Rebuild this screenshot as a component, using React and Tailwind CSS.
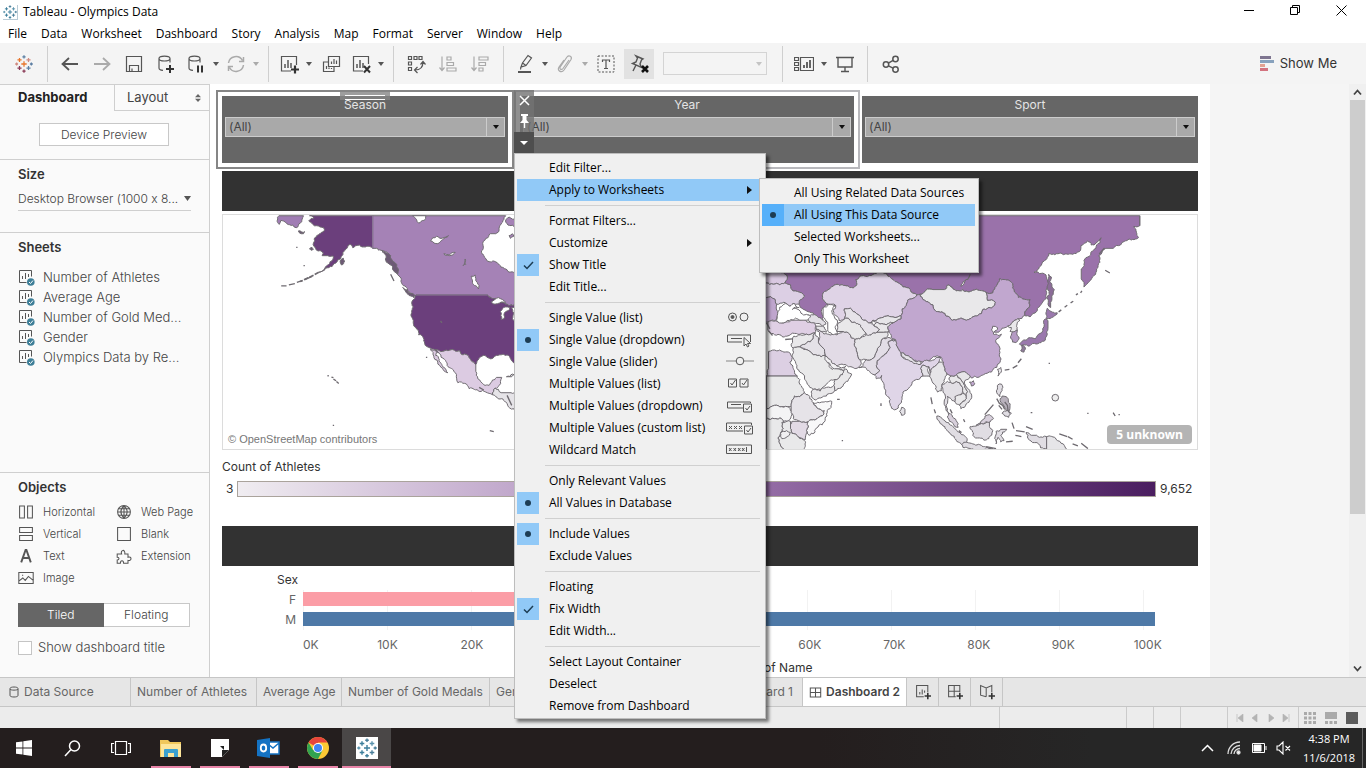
import React from "react";

const UI = "font-['Open_Sans','Noto_Sans','Liberation_Sans',sans-serif]";
const TB = "font-['Inter','Liberation_Sans',sans-serif] [font-feature-settings:'calt'_0]";

/* ---------- map geometry ---------- */

function hash(a, b, c, d) {
  const s = Math.sin(a * 12.9898 + b * 78.233 + c * 37.719 + d * 4.581) * 43758.5453;
  return s - Math.floor(s) - 0.5;
}

// Splits an edge with offsets that depend only on its two ends, so neighbours share borders.
function split(p, q, out, depth) {
  const dx = q[0] - p[0];
  const dy = q[1] - p[1];
  const len = Math.hypot(dx, dy);
  if (depth === 0 || len < 7 || len > 90 || dx === 0 || dy === 0) {
    out.push(q);
    return;
  }
  const flip = p[0] > q[0];
  const a = flip ? q : p;
  const b = flip ? p : q;
  const h = hash(a[0], a[1], b[0], b[1]) * 0.42;
  const m = [(a[0] + b[0]) / 2 - (b[1] - a[1]) * h, (a[1] + b[1]) / 2 + (b[0] - a[0]) * h];
  split(p, m, out, depth - 1);
  split(m, q, out, depth - 1);
}

function coast(text) {
  const pts = text.trim().split(/\s+/).map((t) => t.split(",").map(Number));
  const out = [pts[0]];
  for (let i = 0; i < pts.length; i++) split(pts[i], pts[(i + 1) % pts.length], out, 3);
  return "M" + out.map((p) => p[0].toFixed(1) + " " + p[1].toFixed(1)).join("L") + "Z";
}

const AMERICAS = [
  ["#a07db4", "198,30 272,30 268,40 262,52 250,66 240,58 222,54 212,46 204,44 199,56"],
  ["#6b3f7c", "290,30 480,30 480,128 465,122 450,124 440,118 428,120 420,126 412,116 404,126 396,134 388,150 376,162 364,174 348,186 330,196 318,200 338,184 352,168 362,152 345,150 328,150 332,142 316,136 308,128 302,112 306,96 320,84 334,76 332,66 312,60 300,56 288,44 304,36"],
  ["#a582b6", "480,30 880,30 874,42 866,56 860,72 850,84 834,84 820,98 812,120 814,150 830,168 856,174 880,190 912,196 912,302 880,296 862,288 836,276 824,268 612,268 600,270 585,255 572,240 566,222 556,208 548,190 540,170 528,152 518,138 505,134 492,128 480,128"],
  ["#6b3f7c", "612,268 824,268 836,276 862,288 880,296 912,302 912,480 900,468 888,450 872,446 852,450 842,458 818,450 800,458 790,478 776,466 768,452 752,448 740,436 712,434 690,438 654,428 636,414 618,388 604,362 600,340 602,304 598,288"],
  ["#dccbe2", "668,432 690,438 712,434 740,436 752,448 768,452 776,466 790,478 790,498 796,520 814,538 830,540 840,524 852,516 868,516 860,540 848,548 840,568 820,560 800,558 770,550 736,532 732,508 714,488 696,462 680,444"],
  ["#dccbe2", "654,430 668,434 680,462 694,486 706,502 694,496 676,476 664,456"],
  ["#e6e4e8", "840,568 848,548 858,552 866,562 896,562 912,566 912,618 892,608 880,590 868,580 850,574"],
  ["#fff", "600,30 640,30 634,44 618,52 612,42"],
  ["#fff", "654,106 672,92 708,90 690,102 676,114 664,112"],
  ["#fff", "694,144 728,140 710,150"],
  ["#fff", "752,180 758,160 760,176"],
  ["#fff", "776,212 788,208 794,230 798,250 786,240 780,226"],
  ["#fff", "836,290 858,276 880,290 862,292"],
  ["#fff", "866,342 864,318 880,304 892,306 880,318 874,340"],
  ["#fff", "898,306 912,308 912,350 900,340"],
  ["#a582b6", "880,42 890,34 912,44 912,68 900,58 884,54"],
  ["#a582b6", "890,90 900,84 904,92 894,98"],
  ["#6d5a75", "508,138 522,142 538,164 552,184 556,204 544,196 530,176 518,160"],
  ["#6d5a75", "570,246 584,254 606,268 604,276 586,266"],
  ["#6d5a75", "382,166 392,158 396,166 386,178"],
  ["#6d5a75", "290,130 296,124 302,130 296,134"],
  ["#6d5a75", "256,76 276,78 272,84 260,82"],
  ["#ddd", "882,514 900,506 912,508 898,514"],
];

const ASIA = [
  ["#9a72aa", "0,30 1142,30 1142,60 1124,62 1132,80 1138,96 1110,100 1084,118 1062,128 1040,128 1028,142 1018,150 1022,170 1012,190 1004,210 990,228 974,244 966,220 966,190 974,165 990,152 1010,128 1022,112 1026,96 1010,112 996,118 985,105 965,120 960,138 940,146 905,142 868,144 850,168 838,190 824,200 840,204 860,208 866,225 862,260 850,290 832,318 812,334 796,330 796,318 810,304 812,282 790,280 770,264 760,240 748,224 720,220 706,250 700,262 680,260 640,254 610,252 590,256 565,238 555,252 520,252 482,266 472,268 452,252 430,244 400,222 385,212 345,204 300,212 288,222 290,240 270,246 240,240 210,250 190,262 188,280 205,296 192,306 186,322 190,344 176,336 160,322 140,316 122,306 118,296 134,272 126,262 100,256 92,238 75,232 80,208 60,200 0,200"],
  ["#d9c8e1", "0,200 60,200 80,208 75,232 60,238 40,236 0,240"],
  ["#dccfe4", "0,240 40,236 60,238 75,232 92,238 100,256 126,262 134,272 118,296 104,294 90,302 72,290 50,296 44,280 20,276 0,280"],
  ["#bfa5cd", "0,280 20,276 44,280 50,296 54,318 48,344 20,350 0,346"],
  ["#dfd3e6", "288,222 300,212 345,204 385,212 400,222 430,244 452,252 472,268 456,280 444,284 440,300 428,310 424,330 400,334 380,332 360,338 340,344 332,352 318,344 300,330 280,318 272,308 254,310 252,342 238,345 228,330 220,316 228,300 216,296 205,296 188,280 190,262 210,250 240,240 270,246 290,240"],
  ["#e9e8ea", "482,272 482,266 520,252 555,252 565,238 590,256 610,252 640,254 680,260 684,284 708,290 700,304 670,312 655,330 628,342 600,340 560,332 530,318 520,298 500,288"],
  ["#c1a7cf", "472,268 482,266 482,272 500,288 520,298 530,318 560,332 600,340 628,342 655,330 670,312 700,304 708,290 684,284 680,260 700,262 706,250 720,220 748,224 760,240 770,264 790,280 812,282 810,304 796,318 796,330 775,340 760,350 745,362 728,368 718,380 704,380 714,366 700,362 696,374 702,386 716,390 726,386 712,400 710,412 722,430 720,452 722,470 712,486 696,500 672,508 645,512 636,518 622,504 606,500 590,508 575,512 562,506 556,490 552,470 545,456 530,452 515,460 490,470 460,462 440,450 424,444 416,430 408,404 395,396 388,376 384,364 400,352 424,340 424,330 428,310 440,300 444,284 456,280"],
  ["#c1a7cf", "630,530 642,526 646,534 636,542"],
  ["#dfd5e7", "386,408 408,404 416,430 424,444 440,462 484,476 490,470 515,466 530,456 545,456 538,470 520,486 512,504 508,484 488,480 486,500 490,512 470,522 450,545 430,560 426,590 416,608 404,614 392,600 380,570 370,530 366,510 350,520 344,508 360,496 350,480 364,456 380,444 392,426"],
  ["#e4e2e7", "424,444 440,450 460,462 484,468 484,476 462,474 440,462 426,452"],
  ["#e4e2e7", "488,480 508,484 506,500 514,512 500,512 490,512 486,500"],
  ["#e4e2e7", "426,606 436,612 436,626 426,630 420,618"],
  ["#e2dde6", "296,486 310,480 318,462 340,458 350,440 362,420 372,398 388,396 408,404 386,408 392,426 380,444 364,456 350,480 360,496 344,508 330,498 306,486"],
  ["#e6e5e8", "286,402 300,400 318,390 334,388 352,380 372,380 388,376 384,392 372,398 362,420 350,440 340,458 318,462 296,458 290,436 284,420"],
  ["#e2dbe6", "170,372 184,378 204,386 232,388 250,378 270,386 286,402 284,420 290,436 296,458 304,470 296,486 266,484 252,478 232,482 216,474 204,458 196,448 190,428 176,412 180,396"],
  ["#e9e8ea", "230,378 236,352 252,342 266,338 290,354 310,372 320,386 300,400 286,402 270,386 250,378"],
  ["#e6e3e9", "252,342 254,310 272,308 280,318 300,330 318,344 332,352 344,362 360,372 352,380 334,388 320,386 310,372 290,354 266,338"],
  ["#e6e5e8", "332,352 340,344 360,338 380,332 400,334 424,330 424,340 400,352 372,356 352,350"],
  ["#e9e8ea", "344,362 352,350 372,356 400,352 384,364 388,376 372,380 352,380 360,372"],
  ["#dfcfe4", "24,350 48,346 72,352 94,344 120,344 142,350 160,350 168,362 166,382 140,386 110,384 88,390 60,388 40,384 24,374"],
  ["#e2dfe5", "140,330 160,328 176,336 190,344 198,356 188,362 178,354 164,352 148,346"],
  ["#e6e5e8", "168,362 188,362 200,380 184,378 170,372"],
  ["#e9e8ea", "102,392 122,388 140,386 166,382 160,400 140,412 118,424 100,428 98,404"],
  ["#e4e1e7", "140,412 160,400 166,382 176,396 176,412 190,428 196,448 184,454 160,448 138,432 122,424"],
  ["#e9e9ea", "100,428 118,424 138,432 160,448 184,454 196,450 204,470 218,492 224,486 250,494 248,508 226,522 200,536 160,552 150,546 134,518 120,500 108,474 96,452"],
  ["#e9e8ea", "154,560 160,552 200,546 222,540 226,556 200,572 166,584 156,576"],
  ["#e9e8ea", "226,522 248,508 250,494 258,490 276,506 264,528 244,548 226,556 222,540"],
  ["#f2f1f3", "196,452 206,460 218,474 232,482 250,486 258,482 252,496 240,490 224,490 210,474"],
  ["#dccfe3", "26,438 50,436 86,440 96,462 90,470 104,496 112,512 20,512 26,490"],
  ["#e9e9ea", "20,512 112,512 120,536 134,562 120,574 104,572 96,590 94,604 66,604 44,600 20,610"],
  ["#f4f4f5", "20,610 44,600 66,604 88,606 96,624 90,642 72,648 44,640 20,636"],
  ["#e6e3e8", "104,572 120,574 134,562 150,580 160,592 176,610 194,616 172,640 144,650 120,648 100,640 94,622 94,604 96,590"],
  ["#f8f8f9", "160,592 186,590 216,588 214,606 196,640 170,668 148,690 142,680 144,650 172,640 194,616 176,610"],
  ["#e2dae5", "96,648 120,648 144,650 142,680 136,704 116,696 96,684 92,670"],
  ["#e9e9ea", "66,652 92,648 92,670 96,684 116,696 134,706 132,733 72,733 58,712 62,684"],
  ["#e9e9ea", "20,636 44,640 72,648 66,652 62,684 58,712 72,733 20,733"],
  ["#f0eff1", "62,684 80,676 92,682 82,694 66,700"],
  ["#e6e5e8", "512,504 520,486 538,470 552,470 556,490 562,506 556,520 548,536 546,556 534,560 528,540 516,524"],
  ["#e2dfe5", "548,536 564,528 580,534 590,528 606,542 610,560 590,574 586,590 572,578 564,572 560,600 566,622 560,616 554,590 556,566 550,552"],
  ["#e9e8ea", "575,512 590,508 604,522 616,540 624,558 620,572 610,560 606,542 590,528 580,534 568,522"],
  ["#e6e5e8", "590,508 606,500 622,504 632,514 616,526 618,540 632,562 634,582 620,596 604,610 600,600 616,586 620,572 624,558 616,540 604,522"],
  ["#e9e8ea", "586,574 610,564 620,572 616,586 600,600 588,592"],
  ["#d7cfdb", "566,622 578,630 590,646 596,666 586,664 570,648"],
  ["#e0dde3", "532,632 552,644 580,664 604,686 622,708 618,720 600,712 576,690 556,664 540,650"],
  ["#e0dde3", "606,718 640,716 672,724 700,730 684,733 640,731 610,726"],
  ["#e0dde3", "632,664 650,662 666,654 690,650 690,664 700,676 688,700 660,698 640,690"],
  ["#d7cfdb", "650,660 670,644 690,628 702,640 692,650 672,656"],
  ["#e0dde3", "710,678 724,672 742,672 730,680 724,690 734,706 724,710 716,696 710,716 706,700"],
  ["#e0dde3", "800,682 816,690 832,690 850,696 862,694 862,733 844,728 826,712 806,700"],
  ["#e6e5e8", "862,694 890,702 912,716 924,733 862,733"],
  ["#e0dde3", "714,540 726,536 728,556 722,574 712,562"],
  ["#b9b2bd", "728,572 740,574 752,600 748,618 736,606 724,590"],
  ["#e0dde3", "728,624 744,614 756,624 748,636 736,632"],
  ["#eceaed", "714,492 724,486 722,504 716,512"],
  ["#e9e8ea", "745,362 760,350 775,340 782,344 772,360 774,374 762,380 752,378 756,366"],
  ["#b49ac3", "758,380 774,374 778,394 774,408 760,410 754,398"],
  ["#9a78ad", "858,340 866,346 866,368 862,392 858,404 840,412 820,414 808,422 794,418 780,416 800,404 828,400 842,384 854,364"],
  ["#8f7a9b", "786,420 796,424 794,440 784,436"],
  ["#9a78ad", "864,308 880,320 894,322 882,334 862,340 860,326"],
  ["#8b6c98", "868,206 876,214 878,240 882,266 874,290 874,306 866,296 870,256 866,230"],
  ["#fff", "190,306 206,296 228,300 216,316 224,334 232,356 234,384 216,386 204,372 204,350 190,334"],
  ["#fff", "54,318 72,296 90,302 104,294 118,306 98,312 122,318 152,332 144,344 120,344 94,342 72,352 50,344"],
  ["#fff", "632,206 626,222 604,242 618,222"],
];

const ISLANDS_W = "M205 241h16M228 238l18-4M252 230l16-5M276 222l22-10M344 511h4M356 515l6 2M362 521l8 5M371 528l7 6M832 676l12 3M250 125h4M272 180h4M360 660h4M640 456h4M534 206l10 20M684 346l4 6M800 546l14 8M884 570l14 30";
const ISLANDS_E = "M964 262l4-6M950 268l6-4M934 292l8-5M916 305l8-6M898 319l8-6M1038 194l14 8M1020 145l16-18M736 494l14-2M760 488l14-8M776 472l10-12M868 474h4M814 622h5M984 624h4M1062 622l6 10M1078 628h4M364 594v8M514 576l4 20M524 612l4 12M232 582h8M246 706h4M758 652l6 18M768 690l18 4M800 664l20 8M770 676l26 4M740 710l20-2M680 724l30 6M900 686l24 8M926 694l14 8M940 716l16 6M966 714l20 16M702 598l-26 30M712 580l8 14 10 6 6 12M736 590l8 10 2 16 6 8M718 600l10 12M20 352l10 18M26 376l12 14M76 402l22-2M612 642l4 8M598 676l8 6M572 612l6 12";

function WorldMap() {
  return (
    <svg viewBox="222 214 976 235" preserveAspectRatio="xMidYMid slice" className="block h-[234px] w-full" role="img" aria-label="Athletes by country">
      <g transform="translate(212 205) scale(0.33333)" stroke="#6e6a70" strokeWidth="3" strokeLinejoin="round">
        {AMERICAS.map(([c, d], i) => <path key={i} d={coast(d)} fill={c} />)}
        <path d={ISLANDS_W} fill="none" strokeWidth="4" />
        <path d="M318 200L296 212L262 228" fill="none" strokeWidth="5" strokeDasharray="14 4" />
        <path d="M480 30V128M612 268H824" stroke="#8e749c" fill="none" />
      </g>
      <g transform="translate(760 205) scale(0.33333)" stroke="#6e6a70" strokeWidth="3" strokeLinejoin="round">
        {ASIA.map(([c, d], i) => <path key={i} d={coast(d)} fill={c} />)}
        <path d={ISLANDS_E} fill="none" strokeWidth="4" />
        <circle cx="888" cy="577" r="10" fill="#eee" strokeWidth="3" />
        <path d="M1142 30V60" fill="none" />
      </g>
    </svg>
  );
}

/* ---------- icons ---------- */

function Icon({ size = 20, children, className = "text-[#555]", sw = 1.2, label }) {
  return (
    <svg width={size} height={size} viewBox="0 0 20 20" fill="none" stroke="currentColor" strokeWidth={sw} className={className} aria-hidden={label ? undefined : true} aria-label={label}>
      {children}
    </svg>
  );
}

function Plus({ x, y, s = 3, w = 2 }) {
  return <path d={`M${x - s} ${y}h${2 * s}M${x} ${y - s}v${2 * s}`} strokeWidth={w} stroke="#333" />;
}

function TableauMark({ colors, size }) {
  const [a, b, c, d] = colors;
  const plus = (x, y, r) => `M${x - r} ${y}h${2 * r}M${x} ${y - r}v${2 * r}`;
  return (
    <svg width={size} height={size} viewBox="0 0 20 20" fill="none" strokeWidth="1.4" aria-hidden="true">
      <path d={plus(10, 10, 3)} stroke={a} />
      <path d={plus(5, 5.5, 2.3)} stroke={a} />
      <path d={plus(15, 5.5, 2.3)} stroke={b} />
      <path d={plus(5, 14.5, 2.3)} stroke={d} />
      <path d={plus(15, 14.5, 2.3)} stroke={c} />
      <path d={plus(10, 2.2, 1.8)} stroke={c} />
      <path d={plus(10, 17.8, 1.8)} stroke={d} />
      <path d={plus(1.8, 10, 1.6)} stroke={b} />
      <path d={plus(18.2, 10, 1.6)} stroke={c} />
    </svg>
  );
}

function Caret({ light }) {
  return (
    <button aria-label="More options" className="flex w-3 justify-center">
      <svg width="6" height="4" viewBox="0 0 6 4"><path d="M0 0h6L3 4z" fill={light ? "#aaa" : "#555"} /></svg>
    </button>
  );
}

function Tool({ label, w = "w-8", children }) {
  return <button aria-label={label} className={`flex h-[30px] items-center justify-center ${w}`}>{children}</button>;
}

function Sep({ className = "mx-[6px]" }) {
  return <div className={`h-9 w-px shrink-0 bg-[#cfcfcf] ${className}`} />;
}

const DB = "M3 4.5c0-3.3 11-3.3 11 0s-11 3.3-11 0v9.500c0 1.500 1.500 2.200 4 2.400M14 4.500v4";

function Toolbar() {
  return (
    <div className="flex h-[41px] shrink-0 items-center bg-[#f4f4f4]">
      <Tool label="Start page" w="w-[47px]"><TableauMark size={18} colors={["#e8762d", "#d08a80", "#5c7fa3", "#8a3a56"]} /></Tool>
      <Sep className="mr-[6px]" />
      <Tool label="Undo"><Icon sw={1.8}><path d="M18 10H3M9 4l-6.500 6L9 16" /></Icon></Tool>
      <Tool label="Redo"><Icon sw={1.8} className="text-[#aaa]"><path d="M2 10h15M11 4l6.500 6L11 16" /></Icon></Tool>
      <Tool label="Save"><Icon><path d="M2.500 2.500h15v15h-15zM5.500 17v-5.500h9V17M8 17v-2.500" /></Icon></Tool>
      <Tool label="New data source"><Icon><path d={DB} /><Plus x={14} y={15} s={4} /></Icon></Tool>
      <Tool label="Pause updates" w="w-7"><Icon><path d={DB} /><path d="M12 11.500v7M16 11.500v7" strokeWidth="2" stroke="#333" /></Icon></Tool>
      <Caret />
      <Tool label="Refresh" w="w-7"><Icon className="text-[#aaa]" sw={1.500}><path d="M2.500 9a7.500 7.500 0 0 1 14-2.500M17.500 11a7.500 7.500 0 0 1-14 2.500M17.500 3v4.500H13M2.500 17v-4.500H7" /></Icon></Tool>
      <Caret light />
      <Sep />
      <Tool label="New worksheet" w="w-7"><Icon><path d="M12 17H2.500V2.500h15V11" /><path d="M6 14v-4M9 14V6M12 14V9" strokeWidth="1.500" /><Plus x={16} y={15.500} s={4} w={2.200} /></Icon></Tool>
      <Caret />
      <Tool label="Duplicate"><Icon><path d="M7.500 2.500h11v10h-11zM7 8H2.500v9.500h10.500V13M10.500 10V7.500M13 10V5M15.500 10V6.500M5.500 15v-3M8 15v-1.500M10.500 15v-1" /></Icon></Tool>
      <Tool label="Clear sheet" w="w-7"><Icon><path d="M12 17H2.500V2.500h15V10" /><path d="M6 14v-4M9 14V6M12 14V9" strokeWidth="1.500" /><path d="M13 12l6 6.500M19 12l-6 6.500" strokeWidth="2" stroke="#333" /></Icon></Tool>
      <Caret />
      <Sep />
      <Tool label="Swap rows and columns"><Icon><path d="M2.500 2.500h3v3h-3zM8 2.500h3v3H8zM13 2.500h3v3h-3zM2.500 8h3v3h-3zM2.500 13.500h3v3h-3zM17 8c0 5-3 8-8 8M14.500 10.500L17 7.500l2.500 3M11.500 13L8.500 16l3 3" /></Icon></Tool>
      <Tool label="Sort ascending"><Icon className="text-[#aaa]"><path d="M4 2.500v14M1.500 13.500l2.500 3 2.500-3M9 3h4v3H9zM9 8.500h6.500v3H9zM9 14h9v3H9z" /></Icon></Tool>
      <Tool label="Sort descending"><Icon className="text-[#aaa]"><path d="M4 2.500v14M1.500 13.500l2.500 3 2.500-3M9 3h9v3H9zM9 8.500h6.500v3H9zM9 14h4v3H9z" /></Icon></Tool>
      <Sep className="mx-[7px]" />
      <Tool label="Highlight" w="w-7"><Icon><path d="M6 13l1.500-4L13 1.500l3.500 2.500L11 11.500zM6 13l-.5 2.500M7.500 9l3.500 2.500" /><path d="M3 18h13" strokeWidth="2" /></Icon></Tool>
      <Caret />
      <Tool label="Group members" w="w-7"><Icon className="text-[#aaa]"><path d="M14 6l-6 8.500c-1.500 2-4 .5-2.800-1.500L12 3c2-2.500 5.500-.5 4 2.500L9 16c-2.500 3.500-7.500.5-5-3l5-7" /></Icon></Tool>
      <Caret light />
      <Tool label="Show mark labels" w="w-[30px]"><Icon><path d="M2 2h16v16H2z" strokeDasharray="2 1.500" strokeWidth="1" /><path d="M6.500 8V6h7v2M10 6v8.500M8 14.500h4" /></Icon></Tool>
      <button aria-label="Pin axes" className="ml-[3px] flex h-[30px] w-[30px] items-center justify-center bg-[#e2e2e2]"><Icon><path d="M7 2l7 3-1.500 1L11 10l1.500 3.500-9-4L7 8l1.500-4zM7 11l-3 6" strokeWidth="1.400" /><path d="M13 12l6 6M19 12l-6 6" strokeWidth="2.600" stroke="#111" /></Icon></button>
      <label className="ml-[9px] flex h-[23px] w-[104px] items-center justify-end border border-[#d4d4d4] pr-1">
        <select aria-label="Fit" className="h-full min-w-0 flex-1 appearance-none" disabled />
        <svg width="6" height="4" viewBox="0 0 6 4"><path d="M0 0h6L3 4z" fill="#c4c4c4" /></svg>
      </label>
      <Sep className="mr-[7px] ml-[15px]" />
      <Tool label="Show cards" w="w-7"><Icon><path d="M0.500 3.500h4v3h-4zM0.500 8.500h4v3h-4zM0.500 13.500h4v3h-4zM6.500 3.500h13v13h-13z" /><path d="M10 14v-3M13 14V8M16 14V6" strokeWidth="1.800" /></Icon></Tool>
      <Caret />
      <Tool label="Presentation mode" w="w-[30px]"><Icon><path d="M1 3.500h18M3 3.500v9.500h14V3.500M10 13v4M6 17.500h8" strokeWidth="1.400" /></Icon></Tool>
      <Sep className="mx-[7px]" />
      <Tool label="Share"><Icon sw={1.500}><circle cx="5" cy="10.500" r="2.700" /><circle cx="14.500" cy="5" r="2.700" /><circle cx="14.500" cy="15.500" r="2.700" /><path d="M7.400 9.200l4.700-2.800M7.400 11.800l4.700 2.400" /></Icon></Tool>
      <button className={`ml-auto mr-[29px] flex items-center gap-[6px] text-[13px] text-[#333] ${TB}`}>
        <svg width="14" height="15" viewBox="0 0 14 15" aria-hidden="true"><path d="M0 0h11v3H0z" fill="#7e7590" /><path d="M0 4h14v3H0z" fill="#88a2bd" /><path d="M0 8h5v3H0z" fill="#e2a292" /><path d="M0 12h8v3H0z" fill="#d3737f" /></svg>
        Show Me
      </button>
    </div>
  );
}

/* ---------- sidebar ---------- */

const SHEETS = ["Number of Athletes", "Average Age", "Number of Gold Med...", "Gender", "Olympics Data by Re..."];

const OBJECTS = [
  ["Horizontal", <path key="p" d="M2 2.500h6v15H2zM12 2.500h6v15h-6z" />],
  ["Web Page", <path key="p" d="M10 2a8 8 0 1 0 0 16a8 8 0 1 0 0-16zM2 10h16M3.500 6h13M3.500 14h13M10 2v16M10 2c-5 5-5 11 0 16M10 2c5 5 5 11 0 16" />],
  ["Vertical", <path key="p" d="M2 2h16v6H2zM2 12h16v6H2z" />],
  ["Blank", <path key="p" d="M2 2h16v16H2z" />],
  ["Text", <path key="p" d="M4 18L9.500 2.500h1L16 18M6 12.500h8" strokeWidth="2.400" />],
  ["Extension", <path key="p" d="M1.500 7.500H7C5 2 12 1 11 7.500h4v4c5-1.500 5 5 0 4v3.500H9.500c0-4-4-4-4 0h-4v-4c3 0 3-3.500 0-3.500z" />],
  ["Image", <path key="p" d="M1 3h18v14H1zM1 14l5-4 3 3 4-5 6 5M5 6.500h1.500" />],
];

function Heading({ children }) {
  return <h2 className="text-[13px] leading-5 font-semibold text-[#333]">{children}</h2>;
}

function Sidebar() {
  return (
    <aside className={`flex w-[210px] shrink-0 flex-col border-t border-r border-[#cfcfcf] bg-[#fafafa] text-[#444] font-light ${TB}`}>
      <div className="flex h-[26px] text-[13px]">
        <button className="w-[114px] pl-[18px] text-left font-bold text-[#222]">Dashboard</button>
        <button className="flex flex-1 items-center justify-between border-b border-l border-[#cfcfcf] pr-2 pl-3 font-normal text-[#444]">
          Layout
          <svg width="6" height="8" viewBox="0 0 6 8" aria-hidden="true"><path d="M0 3.300h6L3 0zM0 4.700h6L3 8z" fill="#666" /></svg>
        </button>
      </div>
      <div className="flex h-[49px] items-start border-b border-[#cfcfcf] pt-3 pl-[39px]">
        <button className="h-[23px] w-[130px] border border-[#c8c8c8] bg-white text-xs">Device Preview</button>
      </div>
      <section className="h-[73px] border-b border-[#cfcfcf] pt-1 pr-[18px] pl-[18px]">
        <Heading>Size</Heading>
        <label className="mt-[3px] flex h-6 items-center justify-between border-b border-[#cfcfcf]">
          <select aria-label="Dashboard size" className="min-w-0 flex-1 appearance-none text-xs"><option>Desktop Browser (1000 x 8...</option></select>
          <svg width="7" height="5" viewBox="0 0 7 5" aria-hidden="true"><path d="M0 0h7L3.500 5z" fill="#555" /></svg>
        </label>
      </section>
      <section className="flex-1 pt-1 pl-[18px]">
        <Heading>Sheets</Heading>
        <ul className="mt-[10px] text-[13px] leading-5">
          {SHEETS.map((s) => (
            <li key={s} className="flex h-5 items-center gap-2">
              <svg width="17" height="17" viewBox="0 0 17 17" fill="none" aria-hidden="true">
                <path d="M8.500 13.500h-7v-12h12v6" stroke="#555" />
                <path d="M4.500 10V7M7.500 10V4M10.500 8V5" stroke="#555" />
                <circle cx="12.800" cy="13" r="3.800" fill="#3e7f98" />
                <path d="M11 13l1.500 1.500 2.500-3" stroke="#fff" />
              </svg>
              <span className="truncate">{s}</span>
            </li>
          ))}
        </ul>
      </section>
      <section className="border-t border-[#cfcfcf] px-[18px] pt-1 pb-[19px]">
        <Heading>Objects</Heading>
        <div className="mt-1 grid grid-cols-[98px_1fr] text-[11px]">
          {OBJECTS.map(([name, d]) => (
            <button key={name} className="flex h-[22px] items-center gap-[9px] whitespace-nowrap"><Icon size={16} sw={1.300}>{d}</Icon>{name}</button>
          ))}
        </div>
        <div className="mt-[14px] flex h-6 w-[172px] text-xs">
          <button className="flex-1 bg-[#666] text-white">Tiled</button>
          <button className="flex-1 border border-l-0 border-[#c8c8c8] bg-white">Floating</button>
        </div>
        <label className="mt-[11px] flex h-5 items-center gap-[6px] text-[13px]">
          <input type="checkbox" className="h-[14px] w-[14px] appearance-none border border-[#c4c4c4] bg-white" />
          Show dashboard title
        </label>
      </section>
    </aside>
  );
}

/* ---------- dashboard ---------- */

function Filter({ name }) {
  return (
    <div className={`flex h-[67px] min-w-0 flex-1 flex-col bg-[#666] px-[3px] ${TB}`}>
      <label htmlFor={name} className="h-[21px] text-center text-xs leading-[18px] text-[#e4e4e4]">{name}</label>
      <div className="flex h-[20px] items-stretch border border-[#ccc] bg-[#a9a9a9]">
        <select id={name} className="min-w-0 flex-1 appearance-none pl-[3px] text-xs text-[#444]"><option>(All)</option></select>
        <span className="flex w-[18px] items-center justify-center border-l border-[#ccc]">
          <svg width="6" height="4" viewBox="0 0 6 4" aria-hidden="true"><path d="M0 0h6L3 4z" fill="#111" /></svg>
        </span>
      </div>
    </div>
  );
}

const TICKS = ["10K", "20K", "30K", "40K", "50K", "60K", "70K", "80K", "90K", "100K"];

function Dashboard() {
  return (
    <main className="flex min-w-0 flex-1 bg-[#f5f5f5]">
      <div className={`max-w-[1000px] min-w-0 flex-1 bg-white pt-[6px] pr-3 pl-[6px] text-xs text-[#333] ${TB}`}>
        <div className="grid h-[79px] grid-cols-[298fr_346fr_338fr]">
          <div className="relative flex border-2 border-[#868686] p-1">
            <Filter name="Season" />
            <div className="absolute top-0 left-1/2 flex h-[8px] w-[50px] -translate-x-1/2 flex-col items-center gap-[3px] bg-[#868686]/80 pt-[3px]">
              <i className="h-px w-10 bg-white" /><i className="h-px w-10 bg-white" />
            </div>
          </div>
          <div className="relative flex border-2 border-[#b8b8bc] border-l-[#868686] p-1">
            <Filter name="Year" />
            <div className="absolute -top-[2px] -left-[2px] flex w-5 flex-col items-center text-white">
              <button aria-label="Remove" className="flex h-5 w-5 items-center justify-center bg-[#737373]/80"><svg width="11" height="11" viewBox="0 0 11 11" stroke="currentColor" strokeWidth="1.500"><path d="M1 1l9 9M10 1l-9 9" /></svg></button>
              <button aria-label="Pin" className="flex h-[22px] w-5 items-center justify-center bg-[#737373]/80"><svg width="9" height="14" viewBox="0 0 9 14" fill="currentColor"><path d="M1 0h7v2H6.500v4L9 9H5.200v5H3.800V9H0l2.500-3V2H1z" /></svg></button>
              <button aria-label="Options" className="flex h-[21px] w-5 items-center justify-center bg-[#4e4e4e]"><svg width="8" height="4" viewBox="0 0 8 4"><path d="M0 0h8L4 4z" fill="currentColor" /></svg></button>
            </div>
          </div>
          <div className="flex py-[6px] pl-[2px]"><Filter name="Sport" /></div>
        </div>
        <div className="pl-[6px]">
          <div className="mt-[2px] h-10 bg-[#323232]" />
          <div className="relative mt-[3px] border border-[#dcdcdc]">
            <WorldMap />
            <span className="absolute bottom-[2px] left-[5px] font-['Liberation_Sans',sans-serif] text-[11px] text-[#777]">© OpenStreetMap contributors</span>
            <span className={`absolute right-[5px] bottom-[5px] rounded-sm bg-[#b4b4b4] px-[9px] text-xs leading-[19px] font-bold text-white ${UI}`}>5 unknown</span>
          </div>
          <div className="pt-[7px] leading-5">Count of Athletes</div>
          <div className="flex h-6 items-center gap-1 pl-1">
            <span>3</span>
            <div className="h-4 flex-1 border border-[#aaa39c] bg-linear-to-r from-[#f0edf1] via-[#a27bb2] to-[#4b1e60]" />
            <span className="w-[38px]">9,652</span>
          </div>
          <div className="mt-[25px] h-10 bg-[#323232]" />
          <div className="pt-1 pl-[55px] leading-5">Sex</div>
          <div className="flex leading-5 text-[#666]">
            <div className="w-[81px] pr-[7px] text-right"><div>F</div><div>M</div></div>
            <div className="mr-2 flex-1">
              <div className="flex h-10 flex-col gap-[6px] bg-[repeating-linear-gradient(to_right,#f2f2f2_0_1px,transparent_1px_84px)] pt-[2px]">
                <div className="h-[14px] w-[43%] bg-[#fb9da6]" />
                <div className="h-[14px] w-[96%] bg-[#4e79a7]" />
              </div>
              <div className="flex pt-[5px]">
                <span className="flex-1">0K</span>
                {TICKS.map((t) => <span key={t} className="flex-[2] text-center">{t}</span>)}
              </div>
            </div>
          </div>
          <div className="pt-[5px] pl-[75px] text-center leading-4 text-[#333]">Distinct count of Name</div>
        </div>
      </div>
      <div className="ml-auto flex w-[17px] shrink-0 flex-col items-center justify-between bg-[#f0f0f0] py-[5px]">
        <svg width="9" height="7" viewBox="0 0 9 7" fill="none" stroke="#444" strokeWidth="1.800" aria-hidden="true"><path d="M1 5.500l3.500-4 3.500 4" /></svg>
        <div className="mt-[4px] mb-auto h-[414px] w-[15px] bg-[#cdcdcd]" />
        <svg width="9" height="7" viewBox="0 0 9 7" fill="none" stroke="#444" strokeWidth="1.800" aria-hidden="true"><path d="M1 1.500l3.500 4 3.500-4" /></svg>
      </div>
    </main>
  );
}

/* ---------- context menu ---------- */

const GLYPHS = {
  radios: <><circle cx="6.500" cy="7" r="4" /><circle cx="6.500" cy="7" r="1.500" fill="#555" /><circle cx="18" cy="7" r="4" /></>,
  drop: <><path d="M16 10H1.500V3h23v7M5 6.500h11" /><path d="M18 5.500v8.500l2-2 1.500 3 1.500-1-1.500-2.500h3z" fill="#f0f0f0" /></>,
  slider: <><path d="M0 7h28" stroke="#bbb" strokeWidth="2" /><circle cx="14" cy="7" r="3.800" fill="#f0f0f0" /></>,
  checks: <><path d="M2.500 3h8v8h-8zM14 3h8v8h-8zM4.500 7l1.500 2L9.500 4M16 7l1.500 2L21 4" /></>,
  mdrop: <><path d="M17 10H1.500V4h23v1M5 6.500h10" /><path d="M17.500 6h8v8h-8zM19.500 10l1.500 2 3-4" /></>,
  custom: <><path d="M17 11H.5V3h25v2M3 6l3 3M6 6L3 9M8 6l3 3M11 6L8 9M13 6l3 3M16 6l-3 3" /><path d="M18.500 6h8v8h-8zM20.500 10l1.500 2 3-4" /></>,
  wild: <path d="M.5 3h25v8.500H.5zM3 6l2.500 3M5.500 6L3 9M7.500 6l2.500 3M10 6L7.500 9M12 6l2.500 3M14.500 6L12 9M16 6l2.500 3M18.500 6L16 9M20.500 5v5" />,
};

const MENU = [
  ["Edit Filter..."],
  ["Apply to Worksheets", { sub: true, active: true }],
  null,
  ["Format Filters..."],
  ["Customize", { sub: true }],
  ["Show Title", { mark: "check" }],
  ["Edit Title..."],
  null,
  ["Single Value (list)", { glyph: "radios" }],
  ["Single Value (dropdown)", { mark: "dot", glyph: "drop" }],
  ["Single Value (slider)", { glyph: "slider" }],
  ["Multiple Values (list)", { glyph: "checks" }],
  ["Multiple Values (dropdown)", { glyph: "mdrop" }],
  ["Multiple Values (custom list)", { glyph: "custom" }],
  ["Wildcard Match", { glyph: "wild" }],
  null,
  ["Only Relevant Values"],
  ["All Values in Database", { mark: "dot" }],
  null,
  ["Include Values", { mark: "dot" }],
  ["Exclude Values"],
  null,
  ["Floating"],
  ["Fix Width", { mark: "check" }],
  ["Edit Width..."],
  null,
  ["Select Layout Container"],
  ["Deselect"],
  ["Remove from Dashboard"],
];

const SUBMENU = [
  ["All Using Related Data Sources"],
  ["All Using This Data Source", { mark: "dot", active: true }],
  ["Selected Worksheets..."],
  ["Only This Worksheet"],
];

function MenuRow({ item }) {
  const [text, o = {}] = item;
  const markBg = o.active ? "bg-[#56b0fa]" : "bg-[#91c9f7]";
  return (
    <button role="menuitem" className={`flex h-[22px] w-full items-center text-left whitespace-nowrap ${o.active ? "bg-[#91c9f7]" : ""}`}>
      <span className={`mr-[10px] flex h-[22px] w-[22px] shrink-0 items-center justify-center ${o.mark ? markBg : ""}`}>
        {o.mark === "dot" && <i className="h-[6px] w-[6px] rounded-full bg-[#1d3d54]" />}
        {o.mark === "check" && <svg width="11" height="9" viewBox="0 0 11 9" fill="none" stroke="#1d3d54" strokeWidth="1.500"><path d="M1 4.500l3 3L10 1" /></svg>}
      </span>
      <span className="flex-1">{text}</span>
      {o.sub && <svg width="5" height="8" viewBox="0 0 5 8" className="mr-2"><path d="M0 0v8l5-4z" fill="#111" /></svg>}
      {o.glyph && <svg width="28" height="16" viewBox="0 0 28 16" fill="none" stroke="#555" className="mr-[6px]">{GLYPHS[o.glyph]}</svg>}
    </button>
  );
}

function MenuPanel({ items, className }) {
  return (
    <div role="menu" className={`absolute border border-[#bdbdbd] bg-[#f0f0f0] text-xs text-black shadow-[3px_3px_3px_rgba(0,0,0,0.5)] ${UI} ${className}`}>
      {items.map((m, i) => m ? <MenuRow key={i} item={m} /> : <div key={i} className="flex h-[9px] items-center pl-7"><div className="h-px flex-1 bg-[#d0d0d0]" /></div>)}
    </div>
  );
}

/* ---------- bottom bars ---------- */

const TABS = [
  ["Number of Athletes", "w-[126px]"],
  ["Average Age", "w-[85px]"],
  ["Number of Gold Medals", "w-[148px]"],
  ["Gender", "w-[56px]"],
  ["Olympics Data by Region", "w-[160px]"],
];

const GRID = <path d="M2 3h16v14H2zM10 3v14M2 10h16" />;

function SheetTabs() {
  const tab = "flex shrink-0 items-center border-r border-[#c6c6c6] whitespace-nowrap";
  return (
    <nav className={`flex h-[30px] shrink-0 border-y border-[#c6c6c6] bg-[#e6e6e6] text-xs text-[#666] ${TB}`}>
      <button className={`${tab} w-[131px] gap-1 pl-2`}>
        <svg width="12" height="12" viewBox="0 0 12 12" fill="none" stroke="#555" aria-hidden="true"><path d="M2 2.500c0-2 8-2 8 0v7c0 2-8 2-8 0zM2 3c0 1.500 8 1.500 8 0" /></svg>
        Data Source
      </button>
      {TABS.map(([t, w]) => <button key={t} className={`${tab} ${w} pl-[6px]`}>{t}</button>)}
      <button className={`${tab} w-[97px] justify-end pr-[9px]`}>Dashboard 1</button>
      <button className={`${tab} w-[104px] justify-center gap-1 bg-white font-semibold text-[#444]`}><Icon size={13} sw={1.600}>{GRID}</Icon>Dashboard 2</button>
      <button aria-label="New worksheet" className={`${tab} w-8 justify-center`}><Icon size={16} sw={1.300}><path d="M11 16H2V2h14v8M6 13v-3M9 13V7M12 11V8" /><Plus x={16} y={15} s={4} /></Icon></button>
      <button aria-label="New dashboard" className={`${tab} w-8 justify-center`}><Icon size={16} sw={1.300}><path d="M11 16H2V2h14v8M9 2v14M2 9h14" /><Plus x={16} y={15} s={4} /></Icon></button>
      <button aria-label="New story" className={`${tab} w-8 justify-center`}><Icon size={16} sw={1.300}><path d="M9 16L2 14V2l7 3 7-3v8M9 5v11" /><Plus x={16} y={15} s={4} /></Icon></button>
    </nav>
  );
}

function StatusBar() {
  const cell = "h-full border-l border-[#cbcbcb]";
  return (
    <div className="flex h-[21px] shrink-0 items-center justify-end bg-[#ececec]">
      <div className={`${cell} w-[127px]`} />
      <div className={`${cell} w-[27px]`} />
      <div className={`${cell} w-[27px]`} />
      <div className={`${cell} w-[47px]`} />
      <div className={`${cell} flex w-[71px] items-center justify-around px-1`}>
        {["M1 0v8M7 0v8L2 4z", "M6 0v8L1 4z", "M2 0v8l5-4z", "M1 0v8l5-4zM7 0v8"].map((d) => (
          <button key={d} aria-label="Go to sheet"><svg width="8" height="8" viewBox="0 0 8 8" fill="#b4b4b4" stroke="#b4b4b4" strokeWidth="0.600"><path d={d} /></svg></button>
        ))}
      </div>
      <div className={`${cell} flex w-[68px] items-center justify-around pr-1`}>
        <button aria-label="Sheet sorter"><svg width="12" height="12" viewBox="0 0 12 12" fill="#aaa"><path d="M0 0h3v3H0zM4.500 0h3v3h-3zM9 0h3v3H9zM0 4.500h3v3H0zM4.500 4.500h3v3h-3zM9 4.500h3v3H9zM0 9h3v3H0zM4.500 9h3v3h-3zM9 9h3v3H9z" /></svg></button>
        <button aria-label="Filmstrip"><svg width="12" height="12" viewBox="0 0 12 12" fill="#aaa"><path d="M0 0h12v7H0zM0 9h3v3H0zM4.500 9h3v3h-3zM9 9h3v3H9z" /></svg></button>
        <button aria-label="Sheet tabs" className="h-3 w-3 bg-[#5c5c5c]" />
      </div>
    </div>
  );
}

function Task({ label, children, line = "", w = "w-[49px]" }) {
  return (
    <button aria-label={label} className={`relative flex h-full items-center justify-center ${w}`}>
      {children}
      {line && <i className={`absolute bottom-0 h-[2px] bg-[#e884a8] ${line}`} />}
    </button>
  );
}

function Taskbar() {
  return (
    <footer className={`flex h-10 shrink-0 items-center bg-[linear-gradient(to_right,#241e1e,#241e1e_60%,#262626_80%)] text-white ${UI}`}>
      <Task label="Start" w="w-12"><svg width="16" height="16" viewBox="0 0 16 16" fill="#fff"><path d="M0 2.300L6.500 1.400V7.600H0zM7.300 1.300L16 0v7.600H7.300zM0 8.400h6.500v6.200L0 13.700zM7.300 8.400H16V16l-8.700-1.300z" /></svg></Task>
      <Task label="Search" w="w-12"><svg width="17" height="17" viewBox="0 0 17 17" fill="none" stroke="#fff" strokeWidth="1.500"><circle cx="10.500" cy="6" r="5" /><path d="M7 9.500L1 16" /></svg></Task>
      <Task label="Task view" w="w-[50px]"><svg width="20" height="16" viewBox="0 0 20 16" fill="none" stroke="#fff" strokeWidth="1.200"><path d="M4.500 1.500h11v13h-11zM3 3.500H.6v9H3M17 3.500h2.400v9H17" /></svg></Task>
      <Task label="File Explorer" line="w-10"><svg width="22" height="19" viewBox="0 0 22 19"><path d="M0 1h8l2 2h11v15H0z" fill="#f0c75b" /><path d="M1 5h20v13H1z" fill="#fde59a" /><path d="M4 18v-7q0-1 1-1h12q1 0 1 1v7h-4v-4H8v4z" fill="#3ba0cf" /></svg></Task>
      <Task label="Notes" line="w-10"><svg width="20" height="20" viewBox="0 0 20 20"><path d="M1 1h18v11l-7 7H1z" fill="#fff" /><path d="M19 12h-7v7z" fill="#222" /><path d="M10 8h4v4z" fill="#222" /></svg></Task>
      <Task label="Outlook" line="w-10"><svg width="23" height="20" viewBox="0 0 23 20"><path d="M11 4h11v12H11z" fill="#fff" /><path d="M11 4h11v12H11M11 6l5 4 6-5" fill="none" stroke="#1473c4" strokeWidth="1.500" /><path d="M0 2l13-2v20L0 18z" fill="#1473c4" /><ellipse cx="6.500" cy="10" rx="2.700" ry="3.500" fill="none" stroke="#fff" strokeWidth="1.800" /></svg></Task>
      <Task label="Chrome" line="w-10">
        <svg width="22" height="22" viewBox="0 0 22 22"><circle cx="11" cy="11" r="11" fill="#fcc934" /><path d="M11 11L1.500 5.500A11 11 0 0 1 20.500 5.500H11z" fill="#e8453c" /><path d="M1.500 5.500A11 11 0 0 0 11 22l4.500-8.500L6 13z" fill="#31a350" /><circle cx="11" cy="11" r="5" fill="#fff" /><circle cx="11" cy="11" r="4" fill="#4285f4" /></svg>
      </Task>
      <div className="h-full bg-[#4a4747]"><Task label="Tableau" line="w-full"><span className="flex h-[22px] w-[22px] items-center justify-center bg-white"><TableauMark size={20} colors={["#3d7f9c", "#5b93ad", "#4b7f9a", "#3d7f9c"]} /></span></Task></div>
      <div className="ml-auto flex h-full items-center">
        <div className="mr-[9px] flex items-center gap-[9px]">
          <svg width="13" height="8" viewBox="0 0 13 8" fill="none" stroke="#fff" strokeWidth="1.500"><path d="M1 7l5.500-5.500L12 7" /></svg>
          <svg width="16" height="14" viewBox="0 0 16 14" fill="none" stroke="#ddd" strokeWidth="1.300" className="ml-1"><path d="M1 13A12 12 0 0 1 13 1M4 13a9 9 0 0 1 9-8.500M7 13a6 6 0 0 1 6-5.500" /><circle cx="11.500" cy="11.500" r="1.500" fill="#fff" /></svg>
          <svg width="15" height="10" viewBox="0 0 15 10" fill="none" stroke="#fff"><path d="M.5 .5h12v9H.5zM14 3v4" /><path d="M2 2h7v6H2z" fill="#fff" /></svg>
          <svg width="15" height="14" viewBox="0 0 15 14" fill="none" stroke="#fff" strokeWidth="1.100"><path d="M1 5h2l4-4v12L3 9H1zM9.500 5l4.500 4.500M14 5L9.500 9.500" /></svg>
        </div>
        <div className="w-[58px] text-center text-[11px] leading-[19px] whitespace-nowrap"><div>4:38 PM</div><div>11/6/2018</div></div>
        <div className="ml-1 h-full w-1 border-l border-[#666]" />
      </div>
    </footer>
  );
}

const MENUBAR = ["File", "Data", "Worksheet", "Dashboard", "Story", "Analysis", "Map", "Format", "Server", "Window", "Help"];

export default function App() {
  return (
    <div className="relative flex min-h-screen flex-col overflow-hidden bg-white">
      <header className={`flex h-6 shrink-0 items-center pl-[3px] text-xs text-black ${UI}`}>
        <span className="flex h-[15px] w-[15px] items-center justify-center border-r border-b border-[#b9cbd6]"><TableauMark size={14} colors={["#3d7f9c", "#5b93ad", "#4b7f9a", "#3d7f9c"]} /></span>
        <h1 className="ml-[5px]">Tableau - Olympics Data</h1>
        <div className="ml-auto flex pr-[1px] pb-1">
          <button aria-label="Minimize" className="flex w-[46px] items-center justify-center"><i className="h-px w-[10px] bg-black" /></button>
          <button aria-label="Restore" className="flex w-[45px] items-center justify-center"><svg width="10" height="10" viewBox="0 0 10 10" fill="none" stroke="#000"><path d="M.5 2.500h7v7h-7zM2.500 2.500v-2h7v7h-2" /></svg></button>
          <button aria-label="Close" className="flex w-12 items-center justify-center"><svg width="11" height="11" viewBox="0 0 11 11" fill="none" stroke="#000"><path d="M.5 .5l10 10M10.500 .5l-10 10" /></svg></button>
        </div>
      </header>
      <nav className={`flex h-[19px] shrink-0 items-center gap-[14px] pl-2 text-xs text-black ${UI}`}>
        {MENUBAR.map((m) => <button key={m}>{m}</button>)}
      </nav>
      <Toolbar />
      <div className="flex flex-1">
        <Sidebar />
        <Dashboard />
      </div>
      <SheetTabs />
      <StatusBar />
      <Taskbar />
      <MenuPanel items={MENU} className="top-[153px] left-[514px] w-[252px] pt-[3px] pr-[5px] pb-[1px] pl-[2px]" />
      <MenuPanel items={SUBMENU} className="top-[178px] left-[759px] w-[220px] pt-[3px] pr-[3px] pb-[2px] pl-[2px]" />
    </div>
  );
}
